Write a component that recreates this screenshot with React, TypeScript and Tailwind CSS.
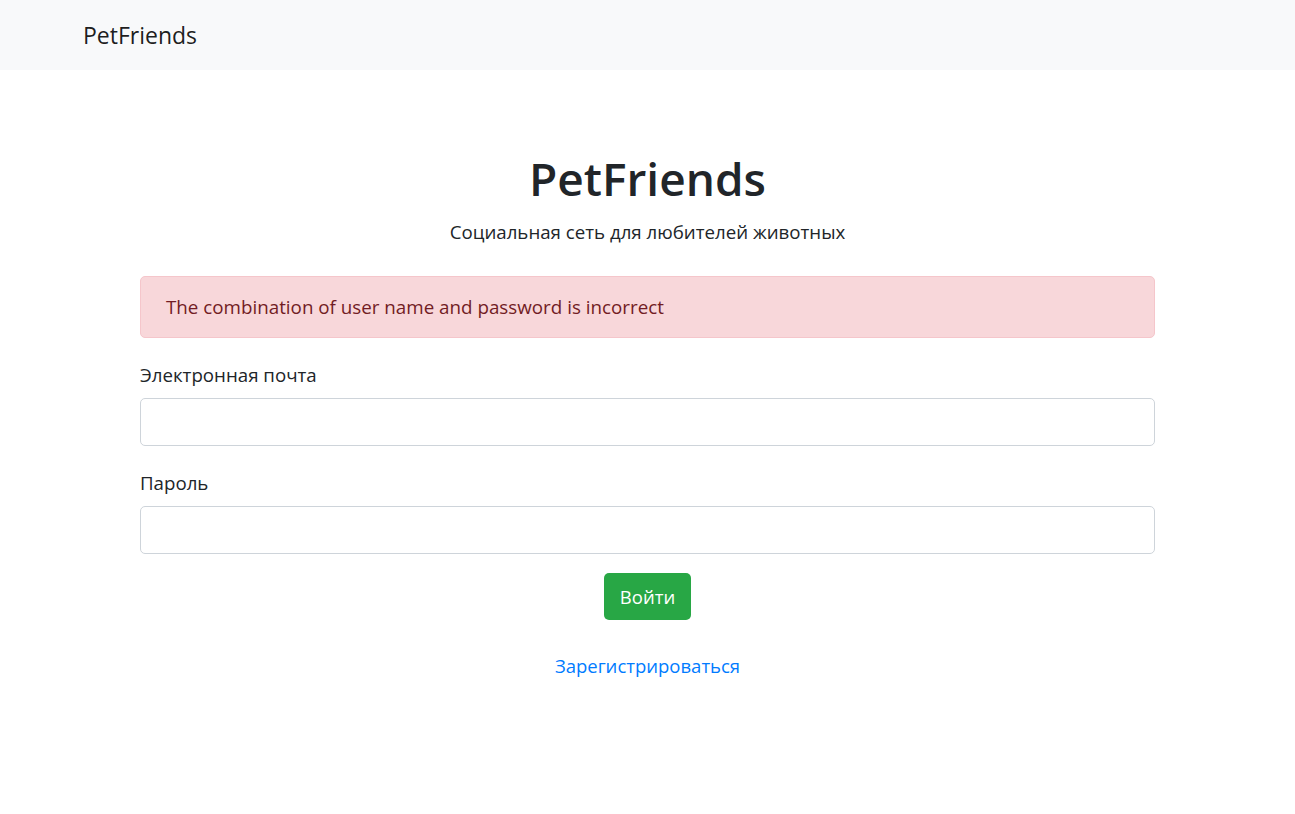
export default function App() {
  const f = { fontFamily: '"Open Sans", sans-serif' };
  return (
    <div className="min-h-screen bg-white text-[#212529]" style={f}>
      <nav className="h-[70px] bg-[#f8f9fa] flex items-center pl-[83px]">
        <span className="text-[23px] text-black/90">PetFriends</span>
      </nav>
      <main className="w-[1015px] mx-auto">
        <h1 className="mt-[78px] text-[46px] leading-[60px] font-semibold text-center">PetFriends</h1>
        <p className="mt-[9px] text-[18.7px] leading-[30px] text-center">Социальная сеть для любителей животных</p>
        <div className="mt-[29px] h-[62px] rounded-[5px] border border-[#f5c6cb] bg-[#f8d7da] text-[#721c24] px-[25px] flex items-center text-[18.8px]">
          The combination of user name and password is incorrect
        </div>
        <label className="block mt-[22px] text-[18.7px] leading-[30px]">Электронная почта</label>
        <input className="block mt-[8px] w-full h-[48px] rounded-[5px] border border-[#ced4da] bg-white" />
        <label className="block mt-[22px] text-[18.7px] leading-[30px]">Пароль</label>
        <input type="password" className="block mt-[8px] w-full h-[48px] rounded-[5px] border border-[#ced4da] bg-white" />
        <div className="flex justify-center mt-[19px]">
          <button className="h-[47px] w-[87px] rounded-[5px] bg-[#28a745] text-white text-[18.5px]">Войти</button>
        </div>
        <div className="flex justify-center mt-[31px]">
          <a className="text-[#007bff] text-[18.5px] leading-[30px]" href="#">Зарегистрироваться</a>
        </div>
      </main>
    </div>
  );
}
